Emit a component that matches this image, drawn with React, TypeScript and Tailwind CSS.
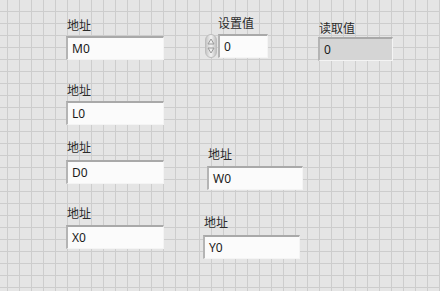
import React from "react";

function Box({ value, width, gray }: { value: string; width: string; gray?: boolean }) {
  return (
    <div
      className={`flex h-[24px] items-center border-t-2 border-l-2 border-t-[#a9a9a9] border-l-[#b4b4b4] border-r border-b border-r-[#f4f4f4] border-b-[#f4f4f4] pl-1 text-[12px] text-[#1a1a1a] ${width} ${
        gray ? "bg-[#d5d5d5]" : "bg-[#fbfbfb]"
      }`}
    >
      <span className="pt-px font-['Noto_Sans','Open_Sans',sans-serif]">{value}</span>
    </div>
  );
}

function Spinner() {
  return (
    <div className="flex h-[24px] w-[12px] items-center justify-center rounded-[6px] border border-[#bdbdbd] bg-[linear-gradient(to_right,#c6c6c6,#f2f2f2,#c2c2c2)]">
      <svg width="8" height="20" viewBox="0 0 8 20">
        <path d="M1 8 L4 3 L7 8 Z" fill="none" stroke="#9a9a9a" strokeWidth="1" />
        <path d="M1 12 L4 17 L7 12 Z" fill="none" stroke="#9a9a9a" strokeWidth="1" />
      </svg>
    </div>
  );
}

function Label({ text, className = "pl-px" }: { text: string; className?: string }) {
  return <div className={`text-[12px] leading-[16px] text-[#2b2b2b] ${className}`}>{text}</div>;
}

function AddressControl({ value, className, width = "w-[98px]" }: { value: string; className: string; width?: string }) {
  return (
    <div className={`absolute flex flex-col ${className}`}>
      <Label text="地址" />
      <Box value={value} width={width} />
    </div>
  );
}

// LabVIEW front panel: every control keeps its own spot on the grid canvas
export default function App() {
  return (
    <div className="relative h-[291px] w-[440px] overflow-hidden bg-[#e5e5e5] bg-[linear-gradient(to_right,#cdcdcd_1px,transparent_1px),linear-gradient(to_bottom,#cdcdcd_1px,transparent_1px)] bg-[size:12px_12px] bg-[position:7px_11px] font-['Noto_Sans_CJK_SC','Noto_Sans',sans-serif]">
      <AddressControl value="M0" className="left-[66px] top-[17px] gap-[3px]" />
      <AddressControl value="L0" className="left-[66px] top-[82px] gap-[3px]" />
      <AddressControl value="D0" className="left-[66px] top-[139px] gap-[5px]" />
      <AddressControl value="X0" className="left-[66px] top-[205px] gap-[4px]" />
      <AddressControl value="W0" className="left-[207px] top-[146px] gap-[4px]" width="w-[96px]" />
      <AddressControl value="Y0" className="left-[203px] top-[214px] gap-[5px]" width="w-[97px]" />

      <div className="absolute left-[205px] top-[15px] flex flex-col gap-[3px]">
        <Label text="设置值" className="pl-[13px]" />
        <div className="flex items-center gap-px">
          <Spinner />
          <Box value="0" width="w-[50px]" />
        </div>
      </div>

      <div className="absolute left-[318px] top-[20px] flex flex-col gap-px">
        <Label text="读取值" />
        <Box value="0" width="w-[75px]" gray />
      </div>
    </div>
  );
}
